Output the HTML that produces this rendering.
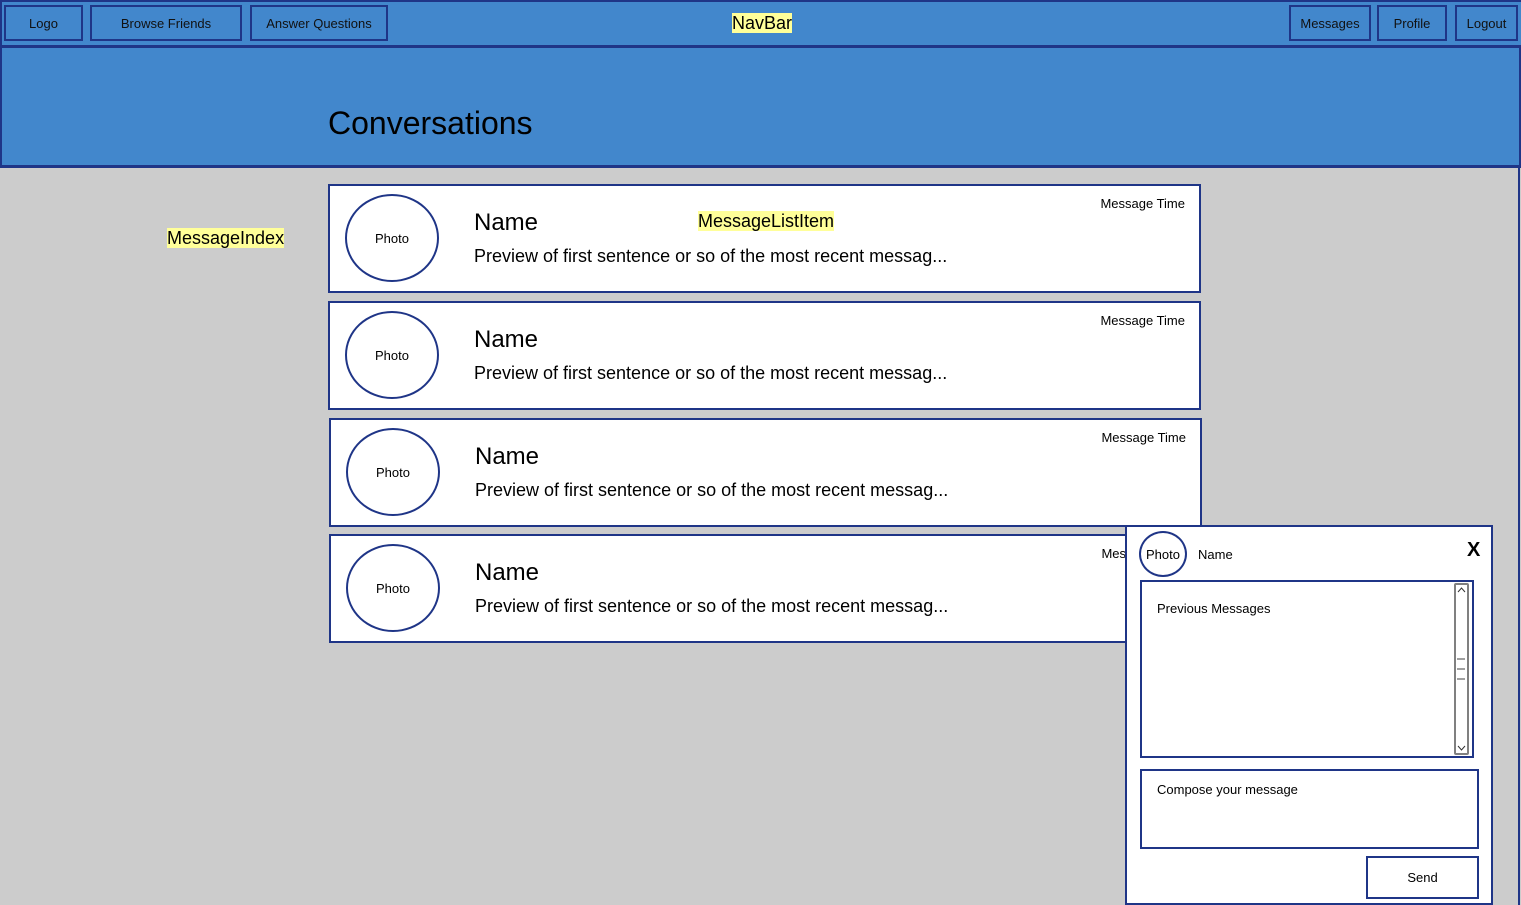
<!DOCTYPE html>
<html><head><meta charset="utf-8"><style>
*{box-sizing:border-box;margin:0;padding:0}
body{width:1521px;height:905px;background:#cccccc;font-family:"Liberation Sans",sans-serif;position:relative;overflow:hidden;color:#000}
.a{position:absolute}
.b{border:2px solid #1f3587}
.nb{background:#4287cc;font-size:13px;display:flex;align-items:center;justify-content:center;color:#111}
.hl{background:#ffff99}
.card{background:#fff;width:873px;height:109px}
.ph{width:94px;height:88px;border-radius:50%;border:2px solid #1f3587;display:flex;align-items:center;justify-content:center;font-size:13px;left:15px;top:8px;background:#fff}
.nm{left:144px;top:23px;font-size:24px}
.pv{left:144px;top:60px;font-size:18px}
.tm{right:14px;top:10px;font-size:13px}
</style></head><body>
<div class="a" style="left:0;top:0;width:1521px;height:48px;background:#4287cc;border-top:2px solid #1f3587;border-bottom:3px solid #1f3587;border-left:2px solid #1f3587"></div>
<div class="a b nb" style="left:4px;top:5px;width:79px;height:36px">Logo</div>
<div class="a b nb" style="left:90px;top:5px;width:152px;height:36px">Browse Friends</div>
<div class="a b nb" style="left:250px;top:5px;width:138px;height:36px">Answer Questions</div>
<div class="a hl" style="left:732px;top:13px;font-size:18px;line-height:20px">NavBar</div>
<div class="a b nb" style="left:1289px;top:5px;width:82px;height:36px">Messages</div>
<div class="a b nb" style="left:1377px;top:5px;width:70px;height:36px">Profile</div>
<div class="a b nb" style="left:1455px;top:5px;width:63px;height:36px">Logout</div>
<div class="a" style="left:0;top:48px;width:1521px;height:120px;background:#4287cc;border:2px solid #1f3587;border-top:none;border-bottom:3px solid #1f3587"></div>
<div class="a" style="left:328px;top:105px;font-size:32px">Conversations</div>
<div class="a" style="left:1518px;top:166px;width:2px;height:739px;background:#1f3587"></div>
<div class="a hl" style="left:167px;top:228px;font-size:18px;line-height:20px">MessageIndex</div>

<div class="a b card" style="left:328px;top:184px"><div class="a ph">Photo</div><div class="a nm">Name</div><div class="a pv">Preview of first sentence or so of the most recent messag...</div><div class="a tm">Message Time</div><div class="a hl" style="left:368px;top:25px;font-size:18px;line-height:20px">MessageListItem</div></div>
<div class="a b card" style="left:328px;top:301px"><div class="a ph">Photo</div><div class="a nm">Name</div><div class="a pv">Preview of first sentence or so of the most recent messag...</div><div class="a tm">Message Time</div></div>
<div class="a b card" style="left:329px;top:418px"><div class="a ph">Photo</div><div class="a nm">Name</div><div class="a pv">Preview of first sentence or so of the most recent messag...</div><div class="a tm">Message Time</div></div>
<div class="a b card" style="left:329px;top:534px"><div class="a ph">Photo</div><div class="a nm">Name</div><div class="a pv">Preview of first sentence or so of the most recent messag...</div><div class="a tm">Message Time</div></div>

<div class="a b" style="left:1125px;top:525px;width:368px;height:380px;background:#fff">
<div class="a" style="left:12px;top:4px;width:48px;height:46px;border-radius:50%;border:2px solid #1f3587;display:flex;align-items:center;justify-content:center;font-size:13px">Photo</div>
<div class="a" style="left:71px;top:20px;font-size:13px">Name</div>
<div class="a" style="left:340px;top:12px;font-size:20px;font-weight:bold">X</div>
<div class="a b" style="left:13px;top:53px;width:334px;height:178px">
<div class="a" style="left:15px;top:19px;font-size:13px">Previous Messages</div>
<div class="a" style="left:312px;top:1px;width:15px;height:172px;border:2px solid #808080;border-radius:2px">
<svg class="a" style="left:0;top:0" width="11" height="168"><path d="M2 7L5.5 3L9 7M2 161L5.5 165L9 161" fill="none" stroke="#333" stroke-width="1"/><path d="M1 74H9M1 84H9M1 94H9" stroke="#808080" stroke-width="1.5"/></svg>
</div></div>
<div class="a b" style="left:13px;top:242px;width:339px;height:80px"><div class="a" style="left:15px;top:11px;font-size:13px">Compose your message</div></div>
<div class="a b" style="left:239px;top:329px;width:113px;height:43px;display:flex;align-items:center;justify-content:center;font-size:13px">Send</div>
</div>
</body></html>
